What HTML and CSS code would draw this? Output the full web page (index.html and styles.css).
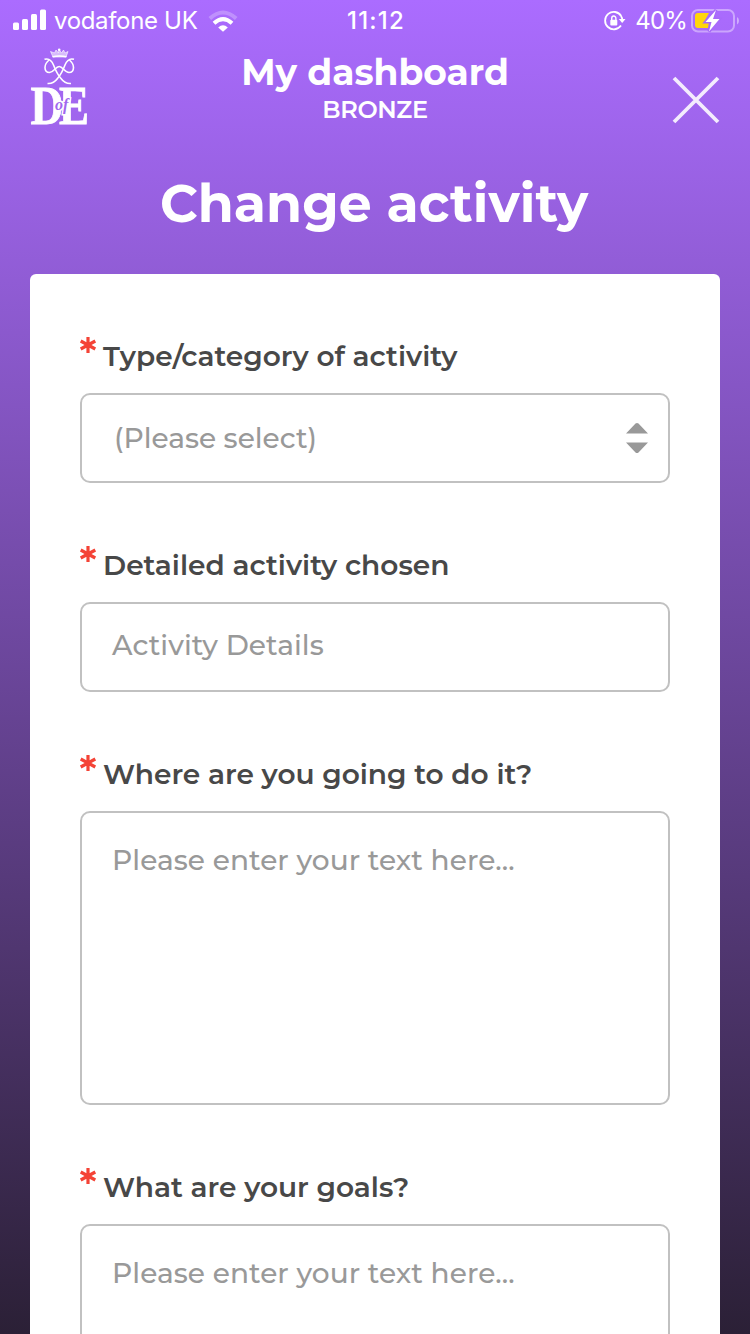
FILE: index.html
```html
<!DOCTYPE html>
<html lang="en">
<head>
<meta charset="utf-8">
<title>Change activity</title>
<link rel="stylesheet" href="styles.css">
</head>
<body>
<div class="screen">
  <div class="status">
    <div class="status-left">
      <svg class="signal" width="34" height="22" viewBox="0 0 34 22" fill="#fff"><rect x="0" y="13.500" width="6" height="7.500" rx="1.500"/><rect x="9" y="10" width="6" height="11" rx="1.500"/><rect x="18" y="5" width="6" height="16" rx="1.500"/><rect x="27" y="0.500" width="6" height="20.500" rx="1.500"/></svg>
      <span class="carrier">vodafone UK</span>
      <svg class="wifi" width="30" height="22" viewBox="0 0 30 22" fill="none" stroke="#fff" stroke-width="4"><path d="M1.800 8.500Q15-3.500 28.200 8.500" opacity=".25"/><path d="M6 13.200Q15 5 24 13.200"/><path d="M10.200 17.500Q15 13.200 19.800 17.500L15 21.800Z" fill="#fff" stroke="none"/></svg>
    </div>
    <div class="clock">11:12</div>
    <div class="status-right">
      <svg class="lock" width="22" height="20" viewBox="0 0 22 20" fill="none" stroke="#fff" stroke-width="1.800"><path d="M17.200 5A8.700 8.700 0 1 0 17 14.500"/><path d="M14.800 8H21.500L18.200 12Z" fill="#fff" stroke="none"/><path d="M17 5Q18.300 7 18.300 9"/><rect x="6.300" y="8.800" width="7" height="5.700" rx="1" fill="#fff" stroke="none"/><path d="M7.700 9V7.500a2.100 2.500 0 0 1 4.200 0V9" stroke-width="1.400"/></svg>
      <span class="percent">40%</span>
      <svg class="battery" width="48" height="24" viewBox="0 0 48 24"><rect x="1" y="1" width="42" height="21.500" rx="6" fill="none" stroke="#fff" stroke-opacity=".4" stroke-width="2"/><path d="M46 8Q48 9 48 11.800T46 15.500Z" fill="#fff" opacity=".45"/><path d="M7 4H18L13 13H18L17 19H7Q4 19 4 16V7Q4 4 7 4Z" fill="#ffd60a"/><path d="M25 1L14.500 13H20.500L18 22.500L28.500 10H22Z" fill="#fff" stroke="#a76af9" stroke-width="3" paint-order="stroke"/></svg>
    </div>
  </div>
  <header class="header">
    <svg class="logo" width="60" height="78" viewBox="0 0 60 78" fill="none" stroke="#fff" role="img">
      <path d="M23 9L20.500 3.500L24.500 5L26 2L28.500 5L29 1.500L31.500 5L33.500 2L35 5L38 3.500L36 9Z" fill="#fff" stroke-width=".6" fill-opacity=".55"/>
      <path d="M22.500 8.800Q29.500 7 36.500 8.800" stroke-width="1.500"/>
      <circle cx="29.200" cy="1.800" r="1.300" fill="#fff" stroke="none"/>
      <path d="M14.500 11.300Q20.500 9.500 23.500 17Q27 26 31 30.500Q35 36 41 35.500M44 11.300Q38 9.500 35 17Q31.500 26 27.500 30.500Q23.500 36 17.500 35.500" stroke-width="1.600"/>
      <path d="M19 12Q15 15.500 15 19.500Q15 24.500 19.500 24.500C24 24.500 25.500 18.500 29.200 18.500S34.500 24.500 39 24.500Q43.500 24.500 43.500 19.500Q43.500 15.500 39.500 12" stroke-width="1.600"/>
      <g class="logo-letters"><text x="0.500" y="75.500" font-size="54" textLength="33" lengthAdjust="spacingAndGlyphs">D</text><text x="29" y="75.500" font-size="54" textLength="30" lengthAdjust="spacingAndGlyphs">E</text></g>
      <text class="logo-of" x="25" y="61.500" font-size="16">of</text>
    </svg>
    <div class="heading">
      <div class="title">My dashboard</div>
      <div class="level">BRONZE</div>
    </div>
    <svg class="close" width="48" height="48" viewBox="0 0 48 48" stroke="#fff" stroke-opacity=".88" stroke-width="3.800"><path d="M2 2L46 46M46 2L2 46"/></svg>
  </header>
  <h1 class="page-title">Change activity</h1>
  <main class="card">
    <section class="field">
      <div class="label"><svg class="star" viewBox="0 0 16 16"><path d="M8 0V16M.7 4L15.300 12M15.300 4L.7 12"/></svg><span>Type/category of activity</span></div>
      <div class="control select"><span>(Please select)</span><svg width="22" height="30" viewBox="0 0 22 30" fill="#999"><path d="M0 10.500L9.500 0.500Q11-.5 12.500.5L22 10.500ZM0 19.500L9.500 29.500Q11 30.500 12.500 29.500L22 19.500Z"/></svg></div>
    </section>
    <section class="field">
      <div class="label"><svg class="star" viewBox="0 0 16 16"><path d="M8 0V16M.7 4L15.300 12M15.300 4L.7 12"/></svg><span>Detailed activity chosen</span></div>
      <div class="control input"><span>Activity Details</span></div>
    </section>
    <section class="field">
      <div class="label"><svg class="star" viewBox="0 0 16 16"><path d="M8 0V16M.7 4L15.300 12M15.300 4L.7 12"/></svg><span>Where are you going to do it?</span></div>
      <div class="control area"><span>Please enter your text here...</span></div>
    </section>
    <section class="field">
      <div class="label"><svg class="star" viewBox="0 0 16 16"><path d="M8 0V16M.7 4L15.300 12M15.300 4L.7 12"/></svg><span>What are your goals?</span></div>
      <div class="control area"><span>Please enter your text here...</span></div>
    </section>
  </main>
</div>
</body>
</html>
```
FILE: styles.css
```css
* { box-sizing: border-box; }
body { margin: 0; overflow: hidden; }
svg { display: block; flex: none; overflow: visible; }
.screen {
  height: 1334px;
  overflow: hidden;
  background: linear-gradient(#ab6cff, #2b2036);
  color: #fff;
  font-family: Montserrat, Inter, sans-serif;
  white-space: nowrap;
}
.status {
  display: grid;
  grid-template-columns: 1fr auto 1fr;
  height: 40px;
  align-items: center;
  padding: 0 11px 0 13px;
  font: 24px/40px Inter, sans-serif;
}
.status-left, .status-right { display: flex; align-items: center; height: 40px; }
.status-right { justify-content: flex-end; }
.signal { margin: -2px 7px 0 0; }
.wifi { margin: 1px 0 0 11px; }
.carrier { letter-spacing: -.33px; padding-top: 1px; }
.clock { padding-top: 1px; font-weight: 500; letter-spacing: 1.2px; }
.lock { margin: 1px 9px 0 0; }
.percent { letter-spacing: -.8px; padding-top: 1px; }
.battery { margin-left: 4px; }
.header {
  display: grid;
  grid-template-columns: 90px 1fr 90px;
  height: 110px;
  padding: 8px 30px 0;
}
.logo-letters { fill: #fff; stroke: #fff; stroke-width: .8; font-family: "Liberation Serif", serif; font-weight: 700; }
.logo-of {
  fill: #a167ef;
  stroke: #fff;
  stroke-width: 3;
  paint-order: stroke;
  font-family: "Liberation Serif", serif;
  font-style: italic;
  font-weight: 700;
}
.heading { text-align: center; }
.title { margin-top: 3px; font-size: 36px; font-weight: 700; line-height: 42px; }
.level { margin-top: 2px; font-size: 24px; font-weight: 600; line-height: 30px; letter-spacing: -.35px; }
.close { margin-top: 28px; justify-self: end; }
.page-title { margin: 0; height: 124px; padding: 20px 2px 0 0; font-size: 52.2px; line-height: 66px; text-align: center; font-weight: 700; }
.card { margin: 0 30px; height: 1070px; padding: 62px 50px 0; background: #fff; border-radius: 6px 6px 0 0; color: #484848; }
.field { margin-bottom: 62px; }
.label { display: flex; height: 57px; font-size: 28px; line-height: 40px; font-weight: 600; }
.star { width: 16px; height: 16px; margin: 1px 7px 0 0; stroke: #f44336; stroke-width: 3.2; fill: none; }
.control { display: flex; border: 2px solid #c1c1c1; border-radius: 10px; height: 90px; padding: 0 20px 0 32px; color: #999; font-size: 28px; font-weight: 500; }
.select { align-items: center; justify-content: space-between; }
.input { line-height: 83px; padding-left: 30px; letter-spacing: .07px; }
.area { height: 294px; padding: 26px 30px; line-height: 42px; letter-spacing: .07px; }
```
